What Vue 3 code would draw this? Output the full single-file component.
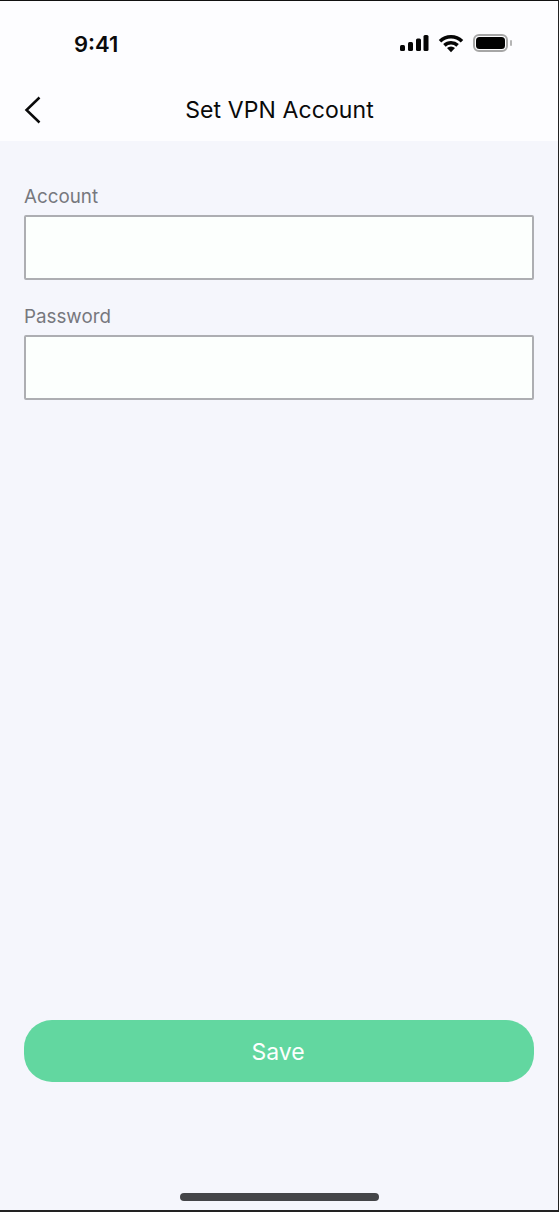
<template>
  <div class="screen">
    <header class="top">
      <div class="status">
        <span class="time">9:41</span>
        <div class="status-icons">
          <svg width="30" height="18" viewBox="0 0 30 18">
            <rect x="1" y="11" width="5" height="6" rx="1.5" />
            <rect x="9" y="8" width="5" height="9" rx="1.5" />
            <rect x="17" y="4.5" width="5" height="12.5" rx="1.5" />
            <rect x="24.5" y="1" width="5" height="16" rx="1.5" />
          </svg>
          <svg class="wifi" width="26" height="19" viewBox="0 0 26 19">
            <path d="M2 7.2a16 16 0 0 1 22 0" />
            <path d="M6.4 11.4a9.6 9.6 0 0 1 13.2 0" />
            <path class="wifi-dot" d="M13 18.2l-4-4.1a5.8 5.8 0 0 1 8 0z" />
          </svg>
          <div class="battery">
            <div class="battery-fill"></div>
          </div>
          <div class="battery-cap"></div>
        </div>
      </div>
      <div class="nav">
        <svg class="back" width="18" height="28" viewBox="0 0 18 28">
          <path d="M15.5 1.5L2.5 14l13 12.500" />
        </svg>
        <h1>Set VPN Account</h1>
      </div>
    </header>

    <main class="body">
      <div class="form">
        <label v-for="f in fields" :key="f" class="field">
          <span>{{ f }}</span>
          <input type="text" />
        </label>
      </div>
      <button class="save">Save</button>
      <div class="home-bar"></div>
    </main>
  </div>
</template>

<script setup>
const fields = ["Account", "Password"];
</script>

<style>
html, body { margin: 0; background: #f5f6fc; }
</style>

<style scoped>
.screen {
  box-sizing: border-box;
  width: 559px;
  height: 1212px;
  display: flex;
  flex-direction: column;
  border-top: 1px solid #111;
  border-right: 1px solid #222;
  border-bottom: 2px solid #222;
  background: #f5f6fc;
  font-family: "Inter", "Liberation Sans", sans-serif;
}
.top { background: #fdfdff; height: 140px; flex: none; }
.status {
  height: 76px;
  box-sizing: border-box;
  padding: 27px 46px 0 74px;
  display: flex;
  justify-content: space-between;
}
.time { font-size: 22px; font-weight: 600; line-height: 32px; color: #0b0b0b; }
.status-icons { display: flex; align-items: center; height: 32px; margin-top: -1px; }
.status-icons svg { fill: #050505; }
.wifi { margin-left: 9px; }
.wifi path { fill: none; stroke: #050505; stroke-width: 3.600; }
.wifi .wifi-dot { fill: #050505; stroke: none; }
.battery {
  margin-left: 9px;
  box-sizing: border-box;
  width: 35px;
  height: 18px;
  padding: 1px;
  border: 2px solid #a6a6a6;
  border-radius: 6px;
}
.battery-fill { height: 100%; background: #020202; border-radius: 3.500px; }
.battery-cap { width: 2px; height: 6px; margin-left: 2px; background: #b5b5b5; border-radius: 1px; }
.nav {
  height: 64px;
  display: flex;
  align-items: center;
  justify-content: center;
  position: relative;
  padding: 2px 0 0 1px;
  box-sizing: border-box;
}
.back {
  position: absolute;
  left: 24px;
  top: 19px;
  fill: none;
  stroke: #0a0a0a;
  stroke-width: 2.500;
}
h1 { margin: 0; font-size: 23px; font-weight: 400; color: #0a0a0a; letter-spacing: 0.100px; }
.body {
  flex: 1;
  display: flex;
  flex-direction: column;
  padding: 0 24px;
  min-height: 0;
}
.form { padding-top: 43px; display: flex; flex-direction: column; gap: 24px; flex: 1; }
.field { display: flex; flex-direction: column; gap: 5px; }
.field span { font-size: 18.800px; line-height: 26px; color: #77787e; }
.field input {
  box-sizing: border-box;
  width: 100%;
  height: 65px;
  border: 2px solid #adaeb2;
  border-radius: 2px;
  background: #fcfffd;
  outline: none;
}
.save {
  flex: none;
  height: 62px;
  padding: 2px 2px 0 0;
  border: 0;
  border-radius: 28px;
  background: #62d7a0;
  color: #fcfffd;
  font-family: inherit;
  font-size: 23px;
}
.home-bar {
  flex: none;
  align-self: center;
  width: 199px;
  height: 8px;
  margin: 111px 0 9px;
  background: #444548;
  border-radius: 4px;
}
</style>
